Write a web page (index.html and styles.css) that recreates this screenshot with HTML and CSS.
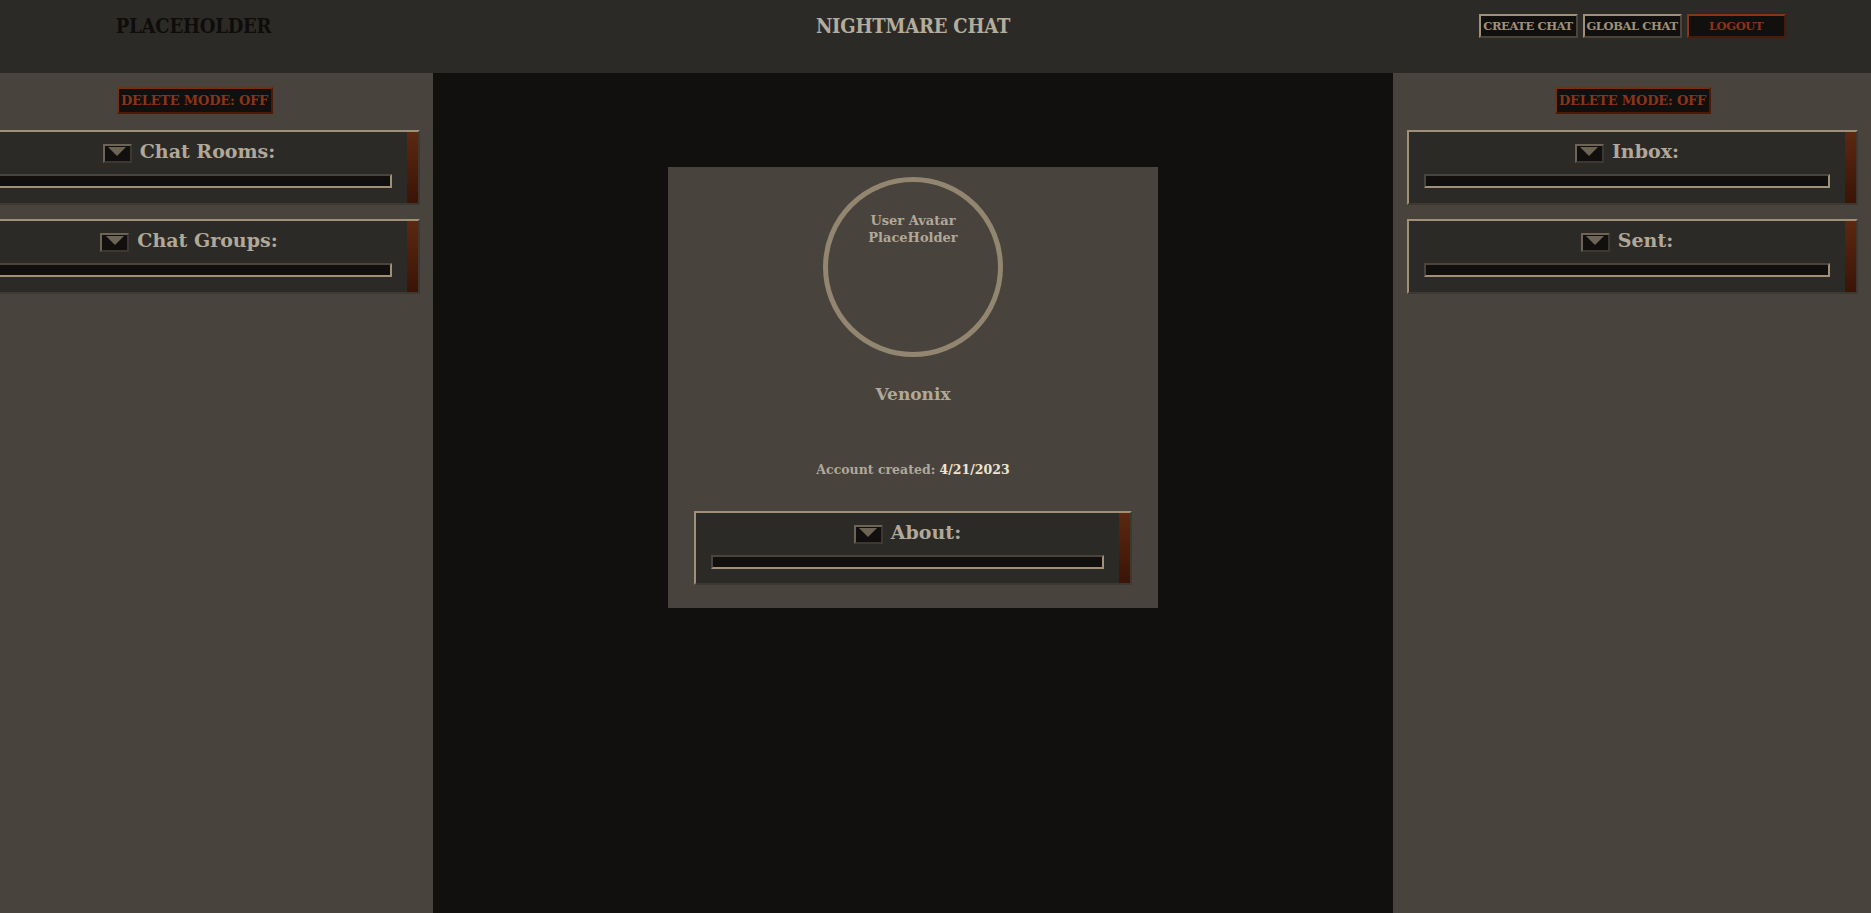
FILE: index.html
```html
<!DOCTYPE html>
<html lang="en">
<head>
<meta charset="utf-8">
<title>Nightmare Chat</title>
<link rel="stylesheet" href="styles.css">
</head>
<body>
<header class="topbar">
  <div class="top-left"><span class="brand">PLACEHOLDER</span></div>
  <div class="top-center"><span class="site-title">NIGHTMARE CHAT</span></div>
  <div class="top-right">
    <button class="nav-btn">CREATE CHAT</button>
    <button class="nav-btn">GLOBAL CHAT</button>
    <button class="nav-btn nav-btn-danger">LOGOUT</button>
  </div>
</header>
<main class="layout">
  <aside class="sidebar sidebar-left">
    <div class="sidebar-inner">
      <button class="delete-btn">DELETE MODE: OFF</button>
      <section class="panel">
        <div class="panel-body">
          <div class="panel-head"><span class="toggle"><span class="tri"></span></span><h2 class="panel-title">Chat Rooms:</h2></div>
          <div class="panel-bar"></div>
        </div>
        <div class="panel-strip"></div>
      </section>
      <section class="panel">
        <div class="panel-body">
          <div class="panel-head"><span class="toggle"><span class="tri"></span></span><h2 class="panel-title">Chat Groups:</h2></div>
          <div class="panel-bar"></div>
        </div>
        <div class="panel-strip"></div>
      </section>
    </div>
  </aside>
  <section class="center">
    <div class="profile">
      <div class="avatar"><span class="avatar-text">User Avatar<br>PlaceHolder</span></div>
      <div class="username">Venonix</div>
      <div class="created">Account created: <span class="created-date">4/21/2023</span></div>
      <section class="panel panel-about">
        <div class="panel-body">
          <div class="panel-head"><span class="toggle"><span class="tri"></span></span><h2 class="panel-title">About:</h2></div>
          <div class="panel-bar"></div>
        </div>
        <div class="panel-strip"></div>
      </section>
    </div>
  </section>
  <aside class="sidebar sidebar-right">
    <div class="sidebar-inner">
      <button class="delete-btn">DELETE MODE: OFF</button>
      <section class="panel">
        <div class="panel-body">
          <div class="panel-head"><span class="toggle"><span class="tri"></span></span><h2 class="panel-title">Inbox:</h2></div>
          <div class="panel-bar"></div>
        </div>
        <div class="panel-strip"></div>
      </section>
      <section class="panel">
        <div class="panel-body">
          <div class="panel-head"><span class="toggle"><span class="tri"></span></span><h2 class="panel-title">Sent:</h2></div>
          <div class="panel-bar"></div>
        </div>
        <div class="panel-strip"></div>
      </section>
    </div>
  </aside>
</main>
</body>
</html>
```
FILE: styles.css
```css
* { box-sizing: border-box; }
html, body { margin: 0; padding: 0; }
body {
  background: #11100e;
  font-family: "DejaVu Serif", "Liberation Serif", serif;
  font-weight: bold;
  color: #b0a899;
  height: 913px;
  overflow: hidden;
}
.topbar {
  display: grid;
  grid-template-columns: 433px 1fr 478px;
  height: 73px;
  background: #2c2a26;
}
.top-left, .top-center, .top-right {
  display: flex;
  justify-content: center;
  align-items: center;
  padding-bottom: 21px;
}
.top-left { padding-right: 46px; }
.brand, .site-title {
  font-family: "DejaVu Serif Condensed", "DejaVu Serif", serif;
  font-stretch: condensed;
  font-size: 20px;
  letter-spacing: -0.2px;
}
.brand { color: #0e0d0b; }
.site-title { color: #b4ac9c; }
.top-right { gap: 5px; }
.nav-btn {
  width: 99px;
  height: 24px;
  padding: 0;
  background: #11100e;
  border: 2px solid;
  border-color: #a09078 #4a443c #4a443c #a09078;
  font-family: inherit;
  font-weight: bold;
  font-size: 11.5px;
  color: #a09078;
  letter-spacing: -0.4px;
  white-space: nowrap;
}
.nav-btn-danger {
  border-color: #8a3410 #4a1a08 #4a1a08 #8a3410;
  color: #8a3418;
}
.layout {
  display: grid;
  grid-template-columns: 433px 1fr 478px;
  height: 840px;
}
.sidebar {
  background: #48433c;
  overflow: hidden;
}
.sidebar-inner {
  width: 478px;
  display: flex;
  flex-direction: column;
  align-items: center;
  padding: 14px 13px 0 14px;
}
.sidebar-left .sidebar-inner { margin-left: -45px; }
.delete-btn {
  height: 27px;
  padding: 0;
  width: 156px;
  background: #11100e;
  border: 2px solid;
  border-color: #7a2e10 #4a1a08 #4a1a08 #7a2e10;
  font-family: inherit;
  font-weight: bold;
  font-size: 13px;
  color: #8a3418;
  letter-spacing: -0.2px;
  white-space: nowrap;
  margin-bottom: 16px;
}
.panel {
  align-self: stretch;
  display: flex;
  height: 75px;
  background: #2c2a26;
  border: 2px solid;
  border-color: #a09078 #3d3832 #3d3832 #a09078;
  margin-bottom: 14px;
}
.panel-body {
  flex: 1;
  padding: 9px 15px 0 15px;
}
.panel-strip {
  width: 11px;
  background: linear-gradient(to bottom, #5c2810, #3a1406);
}
.panel-head {
  height: 24px;
  display: flex;
  justify-content: center;
  align-items: center;
  gap: 8px;
}
.toggle {
  width: 29px;
  height: 19px;
  background: #11100e;
  border: 2px solid;
  border-color: #6e6455 #3d3832 #3d3832 #6e6455;
  display: flex;
  justify-content: center;
  align-items: flex-start;
  padding-top: 1px;
}
.tri {
  width: 0;
  height: 0;
  border-left: 9px solid transparent;
  border-right: 9px solid transparent;
  border-top: 9px solid #6e6455;
}
.panel-title {
  margin: -4px 0 0 0;
  font-size: 19px;
  font-weight: bold;
  color: #b0a899;
  line-height: 24px;
}
.panel-bar {
  margin-top: 9px;
  height: 14px;
  background: #11100e;
  border: 2px solid;
  border-color: #4a443c #a09078 #a09078 #4a443c;
}
.center {
  display: flex;
  justify-content: center;
  align-items: flex-start;
  padding-top: 94px;
}
.profile {
  width: 490px;
  background: #48433c;
  display: flex;
  flex-direction: column;
  align-items: center;
  padding: 10px 26px 23px;
}
.avatar {
  width: 180px;
  height: 180px;
  border-radius: 50%;
  border: 5px solid #938670;
  display: flex;
  justify-content: center;
  padding-top: 30px;
}
.avatar-text {
  font-size: 13px;
  line-height: 17px;
  text-align: center;
  color: #b0a899;
}
.username {
  margin-top: 26px;
  font-size: 17px;
  line-height: 22px;
}
.created {
  margin-top: 56px;
  font-size: 12.5px;
  line-height: 17px;
}
.created-date { color: #ece4d4; }
.panel-about {
  margin-top: 33px;
  margin-bottom: 0;
  height: 74px;
}
```
